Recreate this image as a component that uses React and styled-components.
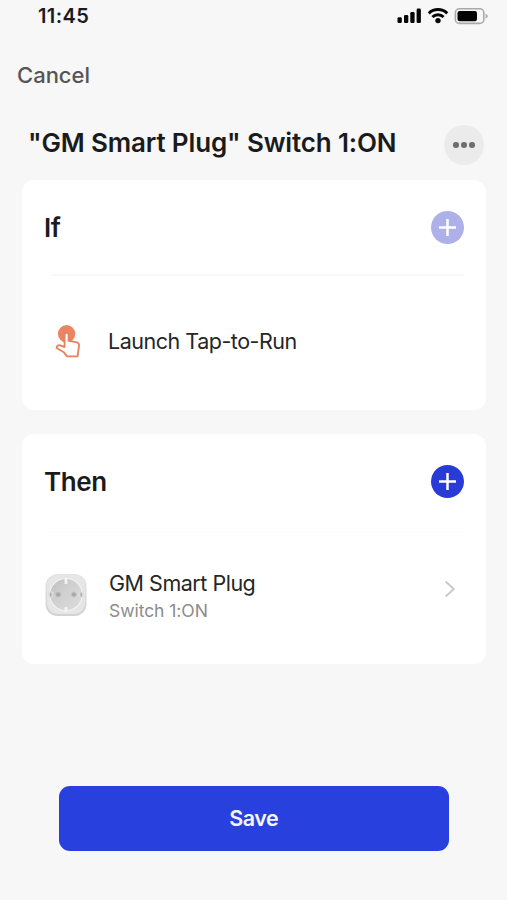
import styled, { createGlobalStyle } from 'styled-components';

const GlobalStyle = createGlobalStyle`
  * {
    box-sizing: border-box;
  }

  body {
    margin: 0;
    background: #f7f7f7;
    font-family: Inter, 'Liberation Sans', sans-serif;
    color: #1b1b1d;
  }

  button {
    border: none;
    padding: 0;
    background: none;
    font-family: inherit;
    cursor: pointer;
  }
`;

const Screen = styled.main`
  display: flex;
  flex-direction: column;
  width: 507px;
  height: 900px;
  overflow: hidden;
`;

// Status bar
const StatusBar = styled.div`
  display: flex;
  align-items: center;
  justify-content: space-between;
  height: 32px;
  padding: 0 18px 0 38px;
`;

const Time = styled.span`
  font-size: 20px;
  font-weight: 600;
  letter-spacing: 0.4px;
  line-height: 32px;
`;

const StatusIcons = styled.svg`
  display: block;
  width: 92px;
  height: 20px;
`;

// Header
const NavBar = styled.nav`
  display: flex;
  align-items: center;
  height: 86px;
  padding-left: 17px;
`;

const CancelButton = styled.button`
  font-size: 22px;
  font-weight: 500;
  line-height: 28px;
  letter-spacing: 0;
  color: #555;
`;

const TitleRow = styled.header`
  display: flex;
  align-items: flex-start;
  justify-content: space-between;
  height: 62px;
  padding: 7px 23px 0 28px;
`;

const Title = styled.h1`
  margin: 0;
  padding-top: 1px;
  font-size: 26px;
  font-weight: 600;
  line-height: 34px;
  letter-spacing: -0.15px;
  white-space: nowrap;
`;

const MoreButton = styled.button`
  display: flex;
  align-items: center;
  justify-content: center;
  gap: 2.5px;
  width: 40px;
  height: 40px;
  border-radius: 50%;
  background: #ebebeb;
`;

const Dot = styled.span`
  width: 5.5px;
  height: 5.5px;
  border-radius: 50%;
  background: #6e6e6e;
`;

// Cards
const Cards = styled.div`
  display: flex;
  flex-direction: column;
  gap: 24px;
  padding: 0 21.5px 0 22px;
`;

const Card = styled.section`
  height: 230px;
  border-radius: 12px;
  background: #fff;
`;

const CardHeader = styled.div`
  display: flex;
  align-items: center;
  justify-content: space-between;
  height: 94px;
  padding: 0 21.5px 0 22px;
`;

const CardTitle = styled.h2`
  margin: 0;
  padding-top: 2px;
  font-size: 26px;
  font-weight: 600;
  line-height: 34px;
  letter-spacing: -0.4px;
`;

const AddButton = styled.button`
  display: block;
  width: 33px;
  height: 33px;
  border-radius: 50%;
  background: ${props => (props.$muted ? '#aeb0ea' : '#283bd6')};

  svg {
    display: block;
  }
`;

const Divider = styled.div`
  height: 2px;
  margin: ${props => (props.$faint ? '3px 22px 0 22px' : '0 22px 0 29px')};
  background: ${props => (props.$faint ? '#fdfdfd' : '#f8f8f8')};
`;

const Row = styled.div`
  display: flex;
  align-items: center;
  height: ${props => props.$height};
  padding: 0 30px 0 ${props => props.$inset};
`;

const RowText = styled.div`
  flex: 1;
  margin-left: ${props => props.$gap};
`;

const RowTitle = styled.div`
  font-size: 21.5px;
  font-weight: 400;
  line-height: 28px;
  letter-spacing: -0.48px;
  color: #262626;
`;

const RowSubtitle = styled.div`
  padding-top: 1px;
  font-size: 17.5px;
  line-height: 26px;
  letter-spacing: -0.05px;
  color: #8c8c8c;
`;

const Icon = styled.svg`
  display: block;
  flex: none;
  margin-bottom: ${props => props.$lift || '0'};
`;

// Footer
const Footer = styled.footer`
  padding: 122px 58px 0 58.5px;
`;

const SaveButton = styled.button`
  width: 100%;
  height: 65px;
  padding-bottom: 2px;
  border-radius: 11px;
  background: #2840de;
  font-size: 21.5px;
  font-weight: 600;
  letter-spacing: -0.5px;
  color: #f4f5ff;
`;

const PlusIcon = () => (
  <svg width="33" height="33" viewBox="0 0 33 33">
    <path d="M16.5 8v17M8 16.5h17" stroke="#fff" strokeWidth="2.5" />
  </svg>
);

const DeviceStatus = () => (
  <StatusIcons viewBox="0 0 92 20">
    <g fill="#050505">
      <rect x="0.5" y="11.2" width="4.3" height="5.8" rx="1.3" />
      <rect x="7" y="9" width="4.3" height="8" rx="1.3" />
      <rect x="13.3" y="6" width="4.3" height="11" rx="1.3" />
      <rect x="19.6" y="2.6" width="4.3" height="14.4" rx="1.3" />
      <circle cx="41" cy="14.6" r="2.7" />
      <rect x="60.5" y="5" width="19.5" height="10.3" rx="2.2" />
    </g>
    <g fill="none" stroke="#050505" strokeWidth="3">
      <path d="M31.8 7.3a13.3 13.3 0 0 1 18.4 0" />
      <path d="M35.4 11a8.2 8.2 0 0 1 11.2 0" />
    </g>
    <rect x="58.4" y="2.8" width="28.4" height="14.6" rx="4" fill="none" stroke="#a9a9a9" strokeWidth="1.6" />
    <path d="M88.6 7.7c2.8.7 2.8 4.1 0 4.8z" fill="#a9a9a9" />
  </StatusIcons>
);

const TapIcon = () => (
  <Icon width="26" height="34" viewBox="0 0 26 34">
    <circle cx="11.6" cy="9.8" r="8.7" fill="#ea8463" />
    <path
      d="M9.6 23V10.7c0-2.6 4-2.6 4 0v6.1l7.2 1.3c2.2.4 3.4 1.7 3.2 3.8l-1.4 10.5H12L8.8 28.2 1.7 24c-.6-2 1.7-3.2 3.4-2.6z"
      fill="#fff"
      stroke="#e4855f"
      strokeWidth="1.9"
      strokeLinejoin="round"
    />
  </Icon>
);

const PlugIcon = () => (
  <Icon width="42" height="44" viewBox="0 0 42 44" $lift="4px">
    <defs>
      <linearGradient id="plugBody" x1="0" y1="0" x2="0" y2="1">
        <stop offset="0" stopColor="#e4e4e4" />
        <stop offset="1" stopColor="#d2d2d2" />
      </linearGradient>
      <linearGradient id="plugSocket" x1="0" y1="0" x2="1" y2="1">
        <stop offset="0" stopColor="#bebebe" />
        <stop offset="0.4" stopColor="#cfcfcf" />
        <stop offset="1" stopColor="#dcdcdc" />
      </linearGradient>
    </defs>
    <rect x="0.5" y="1" width="41" height="42" rx="12" fill="url(#plugBody)" />
    <rect x="2" y="2" width="38" height="39" rx="11" fill="#e6e6e6" />
    <circle cx="21" cy="21.5" r="16.2" fill="url(#plugSocket)" stroke="#f1f1f1" strokeWidth="1.2" />
    <path d="M19.6 5h2.8v6h-2.8zM19.6 34h2.8v5h-2.8z" fill="#f4f4f4" />
    <path d="M3.5 18.5h5v6h-5zM33.5 18.5h5v6h-5z" fill="#dcdcdc" />
    <path d="M5.8 19.8v3.6M36.2 19.8v3.6" stroke="#a8a8a8" strokeWidth="1.4" />
    <circle cx="13.2" cy="21.5" r="2.6" fill="#a9a9a9" stroke="#c4c4c4" strokeWidth="1" />
    <circle cx="28.8" cy="21.5" r="2.6" fill="#a9a9a9" stroke="#c9c9c9" strokeWidth="1" />
  </Icon>
);

const ChevronIcon = () => (
  <Icon width="12" height="18" viewBox="0 0 12 18" $lift="16px">
    <path d="M1.7 1.5 9.8 9l-8.1 7.5" fill="none" stroke="#c8c8c8" strokeWidth="1.9" />
  </Icon>
);

export default function App() {
  return (
    <>
      <GlobalStyle />
      <Screen>
        <StatusBar>
          <Time>11:45</Time>
          <DeviceStatus />
        </StatusBar>
        <NavBar>
          <CancelButton>Cancel</CancelButton>
        </NavBar>
        <TitleRow>
          <Title>"GM Smart Plug" Switch 1:ON</Title>
          <MoreButton aria-label="More">
            <Dot />
            <Dot />
            <Dot />
          </MoreButton>
        </TitleRow>
        <Cards>
          <Card>
            <CardHeader>
              <CardTitle>If</CardTitle>
              <AddButton $muted aria-label="Add condition">
                <PlusIcon />
              </AddButton>
            </CardHeader>
            <Divider />
            <Row $height="130px" $inset="33px">
              <TapIcon />
              <RowText $gap="27px">
                <RowTitle>Launch Tap-to-Run</RowTitle>
              </RowText>
            </Row>
          </Card>
          <Card>
            <CardHeader>
              <CardTitle>Then</CardTitle>
              <AddButton aria-label="Add action">
                <PlusIcon />
              </AddButton>
            </CardHeader>
            <Divider $faint />
            <Row $height="127px" $inset="23px">
              <PlugIcon />
              <RowText $gap="22px">
                <RowTitle>GM Smart Plug</RowTitle>
                <RowSubtitle>Switch 1:ON</RowSubtitle>
              </RowText>
              <ChevronIcon />
            </Row>
          </Card>
        </Cards>
        <Footer>
          <SaveButton>Save</SaveButton>
        </Footer>
      </Screen>
    </>
  );
}
